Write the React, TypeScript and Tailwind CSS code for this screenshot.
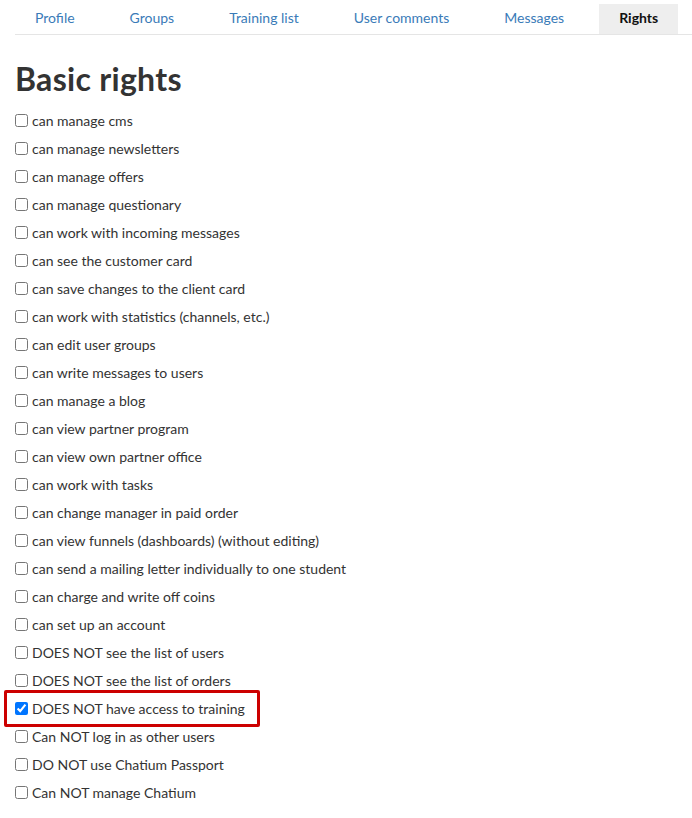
import React from 'react';

const tabs = ['Profile', 'Groups', 'Training list', 'User comments', 'Messages', 'Rights'];

const rights = [
  { label: 'can manage cms' },
  { label: 'can manage newsletters' },
  { label: 'can manage offers' },
  { label: 'can manage questionary' },
  { label: 'can work with incoming messages' },
  { label: 'can see the customer card' },
  { label: 'can save changes to the client card' },
  { label: 'can work with statistics (channels, etc.)' },
  { label: 'can edit user groups' },
  { label: 'can write messages to users' },
  { label: 'can manage a blog' },
  { label: 'can view partner program' },
  { label: 'can view own partner office' },
  { label: 'can work with tasks' },
  { label: 'can change manager in paid order' },
  { label: 'can view funnels (dashboards) (without editing)' },
  { label: 'can send a mailing letter individually to one student' },
  { label: 'can charge and write off coins' },
  { label: 'can set up an account' },
  { label: 'DOES NOT see the list of users' },
  { label: 'DOES NOT see the list of orders' },
  { label: 'DOES NOT have access to training', checked: true, marked: true },
  { label: 'Can NOT log in as other users' },
  { label: 'DO NOT use Chatium Passport' },
  { label: 'Can NOT manage Chatium' },
];

export default function App() {
  return (
    <div className="min-h-screen bg-white px-[15px] text-[#333] font-['Lato','Liberation_Sans',sans-serif]">
      {/* Tabs */}
      <div className="-mr-[15px] flex gap-[15px] border-b border-[#e5e5e5] pt-1">
        {tabs.map((tab) => (
          <div
            key={tab}
            className={`flex h-[30px] shrink-0 items-center whitespace-nowrap px-5 pb-[3px] text-[14px] ${
              tab === 'Rights' ? 'bg-[#eeeeee] font-bold text-[#111]' : 'text-[#3a7bb8]'
            }`}
          >
            {tab}
          </div>
        ))}
      </div>

      <h1 className="mt-[27px] mb-[10px] text-[32px] font-bold leading-[34px] tracking-[0.3px] text-[#333]">
        Basic rights
      </h1>

      <div className="flex flex-col">
        {rights.map((r) => (
          <div key={r.label} className="flex h-[28px] items-center">
            <label
              className={`flex items-center gap-1 text-[14px] ${
                r.marked ? '-mx-[11px] rounded-[2px] border-[3px] border-[#c00] py-[5px] pl-[8px] pr-[12px]' : ''
              }`}
            >
              <input
                type="checkbox"
                defaultChecked={r.checked}
                className="m-0 h-[13px] w-[13px]"
              />
              <span>{r.label}</span>
            </label>
          </div>
        ))}
      </div>
    </div>
  );
}
